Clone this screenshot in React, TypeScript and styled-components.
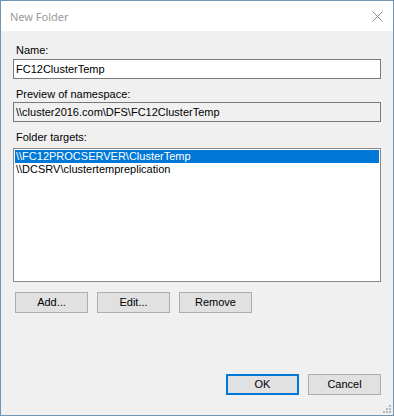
import React from "react";
import styled, { createGlobalStyle } from "styled-components";

const Global = createGlobalStyle`
  html, body { margin: 0; padding: 0; background: #ffffff; }
  * { box-sizing: border-box; }
`;

const Window = styled.div`
  position: relative;
  width: 394px;
  height: 416px;
  border: 1px solid #7393b3;
  background: #f0f0f0;
  display: flex;
  flex-direction: column;
  font-family: "Liberation Sans", Arial, sans-serif;
  font-size: 11px;
  color: #000;
`;

const TitleBar = styled.div`
  height: 30px;
  background: #ffffff;
  display: flex;
  align-items: center;
  justify-content: space-between;
  padding: 0 9px 0 9px;
`;

const Title = styled.span`
  font-family: "Noto Sans", "Open Sans", sans-serif;
  font-size: 11px;
  color: #9a9a9a;
  margin-top: 1px;
`;

const CloseBtn = styled.div`
  width: 12px;
  height: 12px;
  display: flex;
  align-items: center;
  justify-content: center;
  margin-right: 1px;
`;

const Body = styled.div`
  flex: 1;
  display: flex;
  flex-direction: column;
  padding: 13px 12px 20px 12px;
`;

const Label = styled.div<{ $gap: number }>`
  line-height: 13px;
  height: 13px;
  padding-left: 3px;
  margin-bottom: ${(p) => p.$gap}px;
  white-space: nowrap;
`;

const TextBox = styled.div<{ $readOnly?: boolean }>`
  height: 20px;
  border: 1px solid #7a7a7a;
  background: ${(p) => (p.$readOnly ? "#f0f0f0" : "#ffffff")};
  line-height: 18px;
  padding-left: 2px;
  white-space: nowrap;
  margin-bottom: 9px;
`;

const ListBox = styled.div`
  height: 134px;
  border: 1px solid #828790;
  background: #ffffff;
  padding: 1px;
  margin-bottom: 10px;
  display: flex;
  flex-direction: column;
`;

const ListRow = styled.div<{ $selected?: boolean }>`
  height: 13px;
  line-height: 13px;
  padding-left: 1px;
  white-space: nowrap;
  background: ${(p) => (p.$selected ? "#0078d7" : "transparent")};
  color: ${(p) => (p.$selected ? "#ffffff" : "#000000")};
`;

const ButtonRow = styled.div<{ $justify: string }>`
  display: flex;
  gap: 9px;
  justify-content: ${(p) => p.$justify};
  padding-left: 2px;
`;

const Button = styled.div<{ $default?: boolean }>`
  width: 73px;
  height: 21px;
  border: ${(p) => (p.$default ? "2px solid #0078d7" : "1px solid #adadad")};
  background: #e1e1e1;
  display: flex;
  align-items: center;
  justify-content: center;
  line-height: 13px;
`;

const Spacer = styled.div`
  flex: 1;
`;

const Grip = styled.svg`
  position: absolute;
  right: 1px;
  bottom: 1px;
`;

const targets = ["\\\\FC12PROCSERVER\\ClusterTemp", "\\\\DCSRV\\clustertempreplication"];

export default function App() {
  return (
    <>
      <Global />
      <Window>
        <TitleBar>
          <Title>New Folder</Title>
          <CloseBtn>
            <svg width="11" height="11" viewBox="0 0 11 11">
              <path d="M0.5 0.5 L10.5 10.5 M10.5 0.5 L0.5 10.5" stroke="#8a8a8a" strokeWidth="1" />
            </svg>
          </CloseBtn>
        </TitleBar>
        <Body>
          <Label $gap={2}>Name:</Label>
          <TextBox>FC12ClusterTemp</TextBox>
          <Label $gap={1}>Preview of namespace:</Label>
          <TextBox $readOnly>\\cluster2016.com\DFS\FC12ClusterTemp</TextBox>
          <Label $gap={4}>Folder targets:</Label>
          <ListBox>
            {targets.map((t, i) => (
              <ListRow key={t} $selected={i === 0}>
                {t}
              </ListRow>
            ))}
          </ListBox>
          <ButtonRow $justify="flex-start">
            <Button>Add...</Button>
            <Button>Edit...</Button>
            <Button>Remove</Button>
          </ButtonRow>
          <Spacer />
          <ButtonRow $justify="flex-end">
            <Button $default>OK</Button>
            <Button>Cancel</Button>
          </ButtonRow>
        </Body>
        <Grip width="10" height="10" viewBox="0 0 10 10">
          <rect x="7" y="1" width="2" height="2" fill="#b8b8b8" />
          <rect x="4" y="4" width="2" height="2" fill="#b8b8b8" />
          <rect x="7" y="4" width="2" height="2" fill="#b8b8b8" />
          <rect x="1" y="7" width="2" height="2" fill="#b8b8b8" />
          <rect x="4" y="7" width="2" height="2" fill="#b8b8b8" />
          <rect x="7" y="7" width="2" height="2" fill="#b8b8b8" />
        </Grip>
      </Window>
    </>
  );
}
